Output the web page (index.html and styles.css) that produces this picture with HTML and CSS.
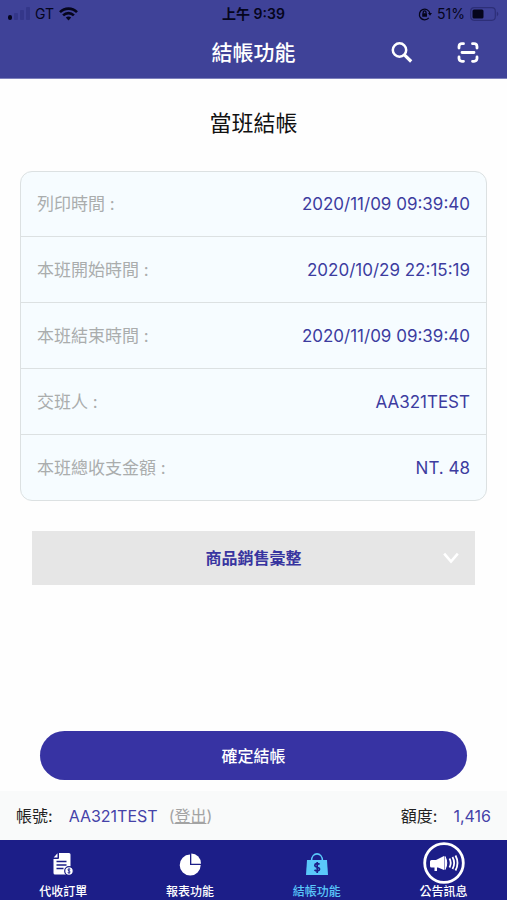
FILE: index.html
```html
<!DOCTYPE html>
<html lang="zh-Hant">
<head>
<meta charset="utf-8">
<meta name="viewport" content="width=device-width, initial-scale=1">
<title>結帳功能</title>
<link rel="stylesheet" href="styles.css">
</head>
<body>
<header class="top">
  <div class="status">
    <div class="status-left">
      <svg class="signal" width="22" height="14" viewBox="0 0 22 14" aria-hidden="true">
        <rect x="0" y="8" width="4" height="5" rx="2" fill="#05051c"/>
        <g fill="#34378a"><rect x="6" y="6" width="4" height="7" rx="1"/><rect x="12" y="3" width="4" height="10" rx="1"/><rect x="18" y="0" width="4" height="13" rx="1"/></g>
      </svg>
      <span>GT</span>
      <svg width="19" height="14" viewBox="0 0 19 14" fill="none" stroke="#05051c" stroke-width="2.6" aria-hidden="true">
        <path d="M1 5.200C5.800 .4 13.200 .4 18 5.200"/><path d="M4.100 8.400c3.100-3 7.700-3 10.800 0"/><path d="M6.800 10.600c1.600-1.400 3.800-1.400 5.400 0L9.500 13.500z" fill="#05051c" stroke="none"/>
      </svg>
    </div>
    <span class="clock">上午 9:39</span>
    <div class="status-right">
      <svg width="14" height="14" viewBox="0 0 14 14" fill="none" stroke="#05051c" stroke-width="1.3" aria-hidden="true">
        <path d="M10.800 10.900A5.300 5.300 0 1 1 11.900 6.400"/><path d="M10 6h4l-2 2.700z" fill="#05051c" stroke="none"/><rect x="4.200" y="6.200" width="4.800" height="3.600" rx=".5" fill="#05051c" stroke="none"/><path d="M5.200 6.500V5.300a1.400 1.400 0 0 1 2.800 0v1.200"/>
      </svg>
      <span>51%</span>
      <svg class="battery" width="29" height="14" viewBox="0 0 29 14" aria-hidden="true">
        <rect x=".7" y=".7" width="24.600" height="12.600" rx="3.500" fill="none" stroke="#2d2f78" stroke-width="1.200"/><rect x="2.500" y="2.500" width="11" height="9" rx="1.500" fill="#05051c"/><path d="M26.800 4.800c2 .7 2 3.700 0 4.400z" fill="#2d2f78"/>
      </svg>
    </div>
  </div>
  <div class="bar">
    <h1 class="bar-title">結帳功能</h1>
    <div class="actions">
      <button class="icon-button" type="button" aria-label="搜尋">
        <svg width="22" height="22" viewBox="0 0 22 22" fill="none" stroke="#fff" stroke-width="2.500" aria-hidden="true"><circle cx="8.500" cy="8" r="6.700"/><path d="M13.400 12.900l6.800 6.600" stroke-width="3.200"/></svg>
      </button>
      <button class="icon-button" type="button" aria-label="掃描">
        <svg width="22" height="22" viewBox="0 0 22 22" fill="none" stroke="#fff" stroke-width="2.800" stroke-linecap="round" aria-hidden="true"><path d="M2 6V4.500A3 3 0 0 1 5 1.700H6.500M15.500 1.700h1.500A3 3 0 0 1 20 4.500V6M20 15v1.500a3 3 0 0 1-3 2.800H15.500M6.500 19.300H5A3 3 0 0 1 2 16.500V15M5 10.500h12"/></svg>
      </button>
    </div>
  </div>
</header>
<main class="content">
  <h2 class="title">當班結帳</h2>
  <dl class="card">
    <div class="row"><dt>列印時間 :</dt><dd>2020/11/09 09:39:40</dd></div>
    <div class="row"><dt>本班開始時間 :</dt><dd>2020/10/29 22:15:19</dd></div>
    <div class="row"><dt>本班結束時間 :</dt><dd>2020/11/09 09:39:40</dd></div>
    <div class="row"><dt>交班人 :</dt><dd>AA321TEST</dd></div>
    <div class="row"><dt>本班總收支金額 :</dt><dd>NT. 48</dd></div>
  </dl>
  <button class="summary" type="button" aria-expanded="false">
    <span class="summary-text">商品銷售彙整</span>
    <svg width="16" height="12" viewBox="0 0 16 12" fill="none" stroke="#fff" stroke-width="2.600" aria-hidden="true"><path d="M1.200 1.600L8 9.500l6.800-7.900"/></svg>
  </button>
  <button class="confirm" type="button">確定結帳</button>
</main>
<footer>
  <div class="account">
    <span>帳號:</span>
    <span class="value">AA321TEST</span>
    <span class="logout">(<a href="#logout">登出</a>)</span>
    <span class="quota">額度:</span>
    <span class="value">1,416</span>
  </div>
  <nav class="tabs">
    <a class="tab" href="#orders">
      <svg width="22" height="24" viewBox="0 0 22 24" aria-hidden="true">
        <path d="M7 1h10a1.500 1.500 0 0 1 1.500 1.500V21a1.500 1.500 0 0 1-1.500 1.500H3A1.500 1.500 0 0 1 1.500 21V7H6a1 1 0 0 0 1-1z" fill="#fff"/><path d="M5.500 1.300v4.200H1.700z" fill="#fff"/>
        <path d="M4.500 9.500h10M4.500 13h10M4.500 16.500h7" stroke="#1c1e88" stroke-width="1.300"/>
        <circle cx="17" cy="19" r="4.300" fill="#fff" stroke="#1c1e88" stroke-width="1.200"/><path d="M18.300 17.300c-2.700-1-3 1.100-1.300 1.600 2 .6 1.300 2.700-1.300 1.700M17 16.300v5.400" fill="none" stroke="#1c1e88" stroke-width=".9"/>
      </svg>
      <span>代收訂單</span>
    </a>
    <a class="tab" href="#reports">
      <svg width="24" height="24" viewBox="0 0 24 24" fill="#fff" aria-hidden="true"><path d="M12 2.500V13h10.700A10.500 10.500 0 1 1 12 2.500z"/><path d="M13.300 1.500A10 10 0 0 1 23 11.700H13.300z"/></svg>
      <span>報表功能</span>
    </a>
    <a class="tab active" href="#checkout" aria-current="page">
      <svg width="24" height="24" viewBox="0 0 24 24" aria-hidden="true"><path d="M2 8h20l1 15H1z" fill="#5ac8fa"/><path d="M6.500 9C6.500-.5 17.500-.5 17.500 9" fill="none" stroke="#5ac8fa" stroke-width="1.600"/><path d="M14.600 12.400c-1.500-1.300-4.800-1-4.800 1s4.800 1.500 4.800 3.700-3.300 2.400-5.100.7M12.200 10v11" fill="none" stroke="#1c1e88" stroke-width="1.700"/></svg>
      <span>結帳功能</span>
    </a>
    <a class="tab" href="#news">
      <svg width="42" height="42" viewBox="0 0 42 42" fill="none" stroke="#fff" aria-hidden="true">
        <circle cx="21" cy="21" r="19.300" stroke-width="2.800"/>
        <path d="M7 19.500q0-1.500 1.500-1.500H13l8-4v14L15 25.500h-1V29H11.500v-3.500H8.500Q7 25.500 7 24z" fill="#fff" stroke="none"/>
        <path d="M22 14.500q3.500 6.500 0 13z" fill="#fff" stroke-width="1"/><path d="M26.500 16.500q2.500 4.500 0 9M29.500 15q3.300 6 0 12M32.500 13.500q4 7.500 0 15" stroke-width="1.800"/>
      </svg>
      <span>公告訊息</span>
    </a>
  </nav>
</footer>
</body>
</html>
```
FILE: styles.css
```css
* { box-sizing: border-box; }
body {
  margin: 0;
  min-height: 100vh;
  display: flex;
  flex-direction: column;
  background: #fefefe;
  color: #222;
  font-family: Inter, "Noto Sans CJK TC", sans-serif;
}
button { border: 0; padding: 0; font: inherit; cursor: pointer; }
h1, h2, dl, dd { margin: 0; }
a { color: inherit; }
svg { display: block; }

.top { background: #3f4298; border-bottom: 1px solid #7d80bb; }
.status {
  display: grid;
  grid-template-columns: 1fr auto 1fr;
  align-items: center;
  height: 28px;
  padding: 0 8px;
  color: #05051c;
  font-size: 14px;
  line-height: 20px;
}
.status-left, .status-right { display: flex; align-items: center; gap: 5px; }
.status-right { justify-content: flex-end; }
.clock { font-weight: 600; }
.bar {
  display: grid;
  grid-template-columns: 1fr auto 1fr;
  align-items: center;
  height: 50px;
  padding: 0 28px;
  color: #fff;
}
.bar-title { grid-column: 2; font-size: 21px; font-weight: 500; line-height: 30px; }
.actions { display: flex; justify-content: flex-end; gap: 44px; }
.icon-button { background: none; }

.content { flex: 1; display: flex; flex-direction: column; padding: 28px 20px 11px; }
.title { color: #111; font-size: 22px; font-weight: 400; line-height: 32px; text-align: center; }
.card {
  margin-top: 32px;
  border: 1px solid #dce1e2;
  border-radius: 12px;
  background: #f6fcff;
}
.row {
  display: flex;
  align-items: center;
  justify-content: space-between;
  height: 66px;
  padding: 0 16px;
  font-size: 17px;
  line-height: 24px;
}
.row + .row { border-top: 1px solid #dce1e2; }
.row:first-child { height: 64px; }
.row dt { color: #aaadad; }
.row dd { color: #3d3c9f; }
.summary {
  display: grid;
  grid-template-columns: 1fr auto 1fr;
  align-items: center;
  height: 54px;
  margin: 30px 12px 24px;
  padding: 0 16px;
  background: #e6e6e6;
  color: #3835a0;
  font-size: 16px;
  font-weight: 700;
  line-height: 22px;
}
.summary-text { grid-column: 2; }
.summary svg { justify-self: end; }
.confirm {
  height: 49px;
  margin: auto 20px 0;
  border-radius: 25px;
  background: #3733a3;
  color: #fff;
  font-size: 16px;
  font-weight: 500;
  line-height: 22px;
}

.account {
  display: flex;
  align-items: center;
  height: 49px;
  padding: 0 16px;
  background: #f9fafa;
  font-size: 16px;
  line-height: 22px;
}
.account .value { margin-left: 16px; color: #4542a8; }
.logout { margin-left: 11px; color: #a3a3a3; }
.quota { margin-left: auto; }
.tabs { display: grid; grid-template-columns: repeat(4, 1fr); height: 60px; background: #1c1e88; }
.tab {
  display: flex;
  flex-direction: column;
  align-items: center;
  justify-content: flex-end;
  gap: 8px;
  color: #fff;
  font-size: 12px;
  font-weight: 500;
  line-height: 16px;
  text-decoration: none;
}
.tab.active { color: #5ac8fa; }
.tab:last-child { gap: 0; }
```
